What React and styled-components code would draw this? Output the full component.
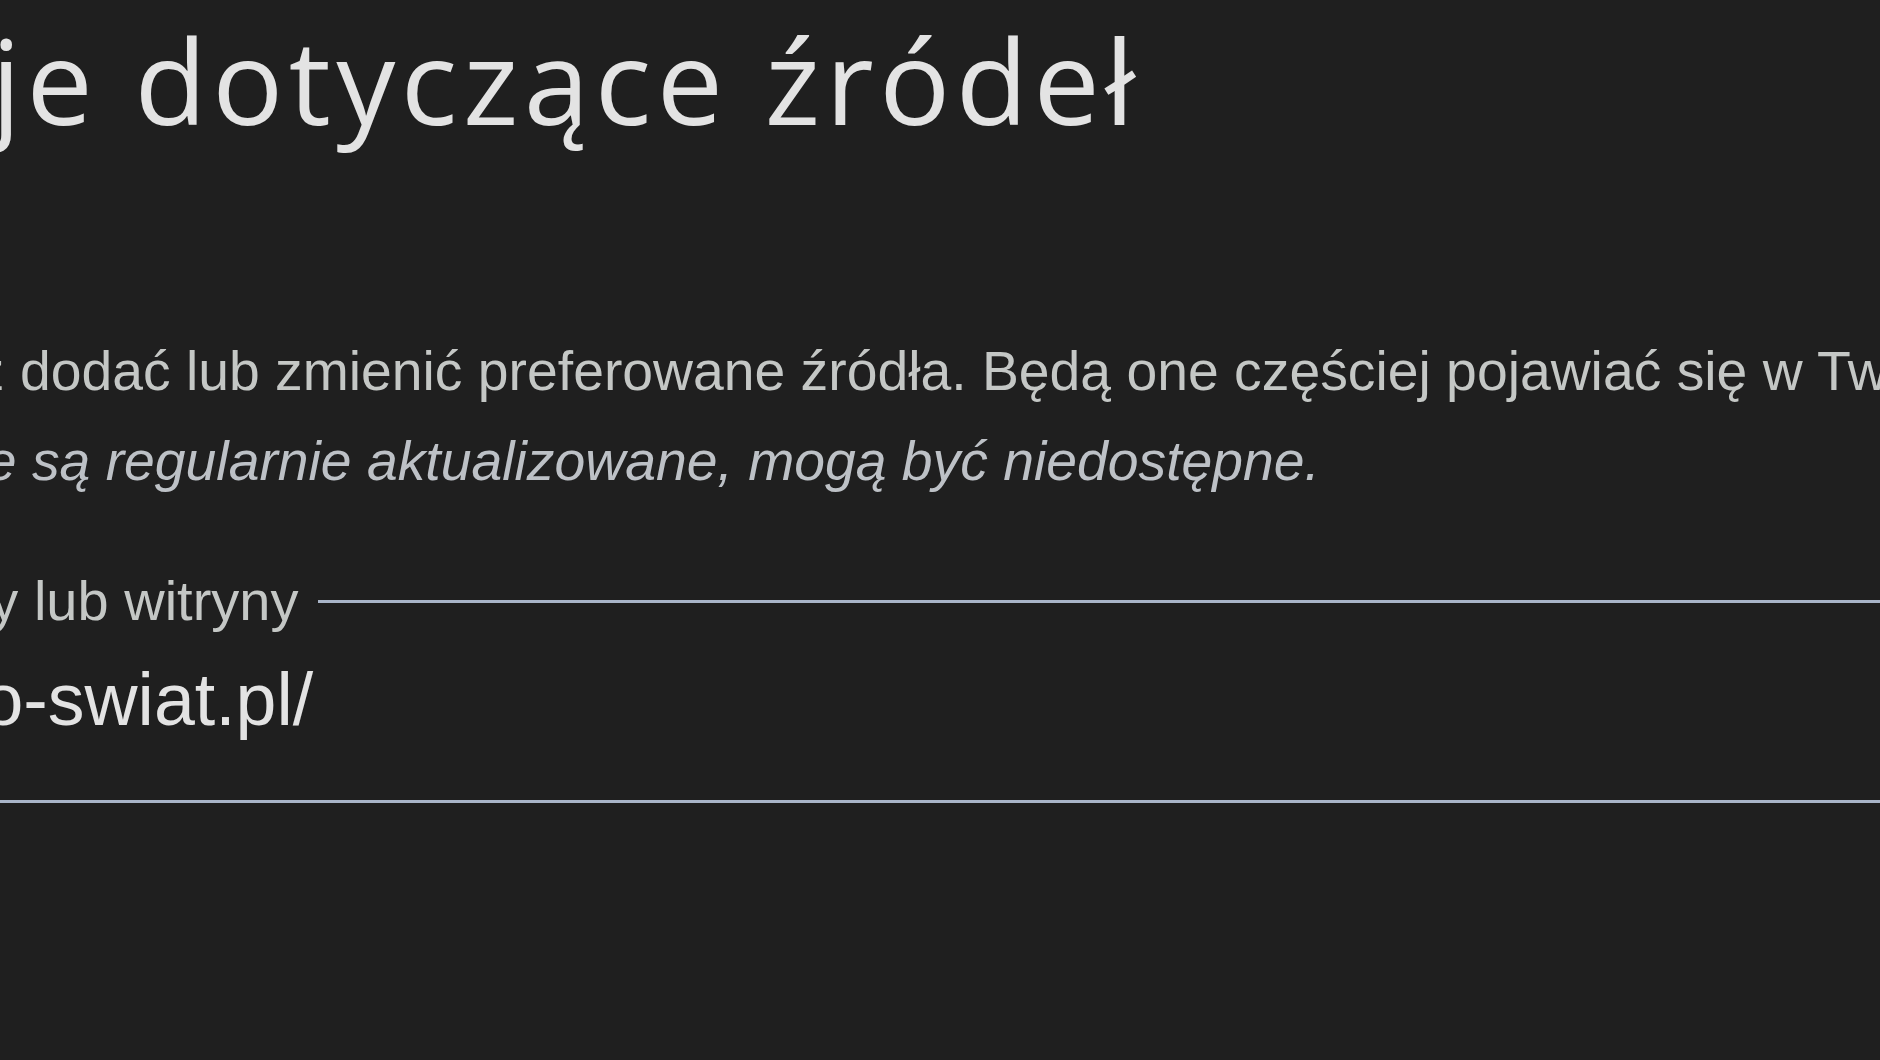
import React from "react";
import styled, { createGlobalStyle } from "styled-components";

const GlobalStyle = createGlobalStyle`
  html, body {
    margin: 0;
    padding: 0;
    background: #1f1f1f;
    overflow: hidden;
  }
`;

const Page = styled.main`
  width: 1880px;
  height: 1060px;
  overflow: hidden;
  background: #1f1f1f;
  display: flex;
  flex-direction: column;
`;

// each line is cut on the left by the page edge, shift says how much
const Title = styled.h1`
  margin: 0;
  padding-top: 21px;
  margin-left: ${(p) => -p.$shift}px;
  font-family: "Open Sans", "Noto Sans", sans-serif;
  font-weight: 400;
  font-size: 118px;
  letter-spacing: 5.5px;
  line-height: 1;
  color: #e3e3e3;
  white-space: nowrap;
`;

const Intro = styled.section`
  margin-top: 187px;
  display: flex;
  flex-direction: column;
`;

const Text = styled.p`
  margin: 0;
  margin-left: ${(p) => -p.$shift}px;
  font-family: "Liberation Sans", Arial, sans-serif;
  font-size: 55.3px;
  line-height: 90px;
  font-style: ${(p) => (p.$note ? "italic" : "normal")};
  color: ${(p) => (p.$note ? "#bdc1c6" : "#c4c7c5")};
  white-space: nowrap;
`;

const Field = styled.div`
  margin-top: 67px;
  display: flex;
  flex-direction: column;
  border-bottom: 3px solid #a9b5c8;
`;

const LabelRow = styled.div`
  display: flex;
  align-items: center;
  gap: 20px;
  height: 56px;
`;

const Label = styled.span`
  margin-left: ${(p) => -p.$shift}px;
  font-family: "Liberation Sans", Arial, sans-serif;
  font-size: 56px;
  line-height: 1;
  color: #c4c7c5;
  white-space: nowrap;
`;

const Rule = styled.div`
  flex: 1;
  height: 3px;
  background: #a9b5c8;
`;

const Value = styled.div`
  padding: 34px 0 63px;
  margin-left: ${(p) => -p.$shift}px;
  font-family: "Liberation Sans", Arial, sans-serif;
  font-size: 73.5px;
  line-height: 1;
  color: #e3e3e3;
  white-space: nowrap;
`;

export default function App() {
  return (
    <>
      <GlobalStyle />
      <Page>
        <Title $shift={593}>Preferencje dotyczące źródeł</Title>
        <Intro>
          <Text $shift={186}>
            Możesz dodać lub zmienić preferowane źródła. Będą one częściej
            pojawiać się w Twoich wynikach wyszukiwania.
          </Text>
          <Text $shift={383} $note>
            Źródła, które nie są regularnie aktualizowane, mogą być niedostępne.
          </Text>
        </Intro>
        <Field>
          <LabelRow>
            <Label $shift={296}>Adres strony lub witryny</Label>
            <Rule />
          </LabelRow>
          <Value $shift={516}>https://www.auto-swiat.pl/</Value>
        </Field>
      </Page>
    </>
  );
}
